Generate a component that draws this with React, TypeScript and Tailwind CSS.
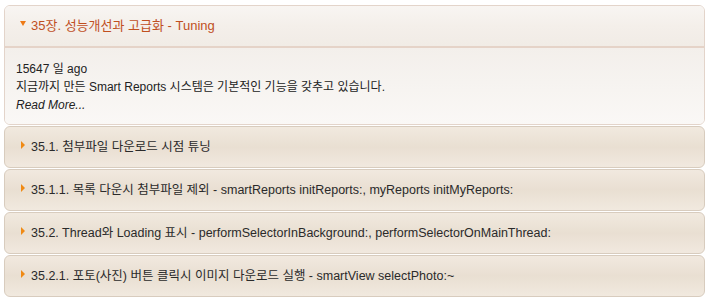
import React from 'react';

const font = { fontFamily: '"Liberation Sans", "Noto Sans CJK KR", sans-serif' };

const items = [
  '35.1. 첨부파일 다운로드 시점 튜닝',
  '35.1.1. 목록 다운시 첨부파일 제외 - smartReports initReports:, myReports initMyReports:',
  '35.2. Thread와 Loading 표시 - performSelectorInBackground:, performSelectorOnMainThread:',
  '35.2.1. 포토(사진) 버튼 클릭시 이미지 다운로드 실행 - smartView selectPhoto:~',
];

const App: React.FC = () => {
  return (
    <div className="w-[709px] h-[301px] bg-white px-[4px] pt-[5px]" style={font}>
      <div className="rounded-[6px] border border-[#e3d4ca] overflow-hidden">
        <div className="h-[42px] flex items-center pl-[15px] border-b-2 border-[#e5d3c8] bg-linear-to-b from-[#f8f5f2] via-[#f4efea] to-[#f1ece6]">
          <span className="w-0 h-0 border-l-[3px] border-r-[3px] border-t-[5px] border-l-transparent border-r-transparent border-t-[#ee7a16] mr-[5px] -mt-[6px]" />
          <span className="text-[13px] text-[#c04f1f]">35장. 성능개선과 고급화 - Tuning</span>
        </div>
        <div className="h-[76px] pl-[11px] pt-[12px] text-[12px] leading-[18px] text-[#222] bg-linear-to-b from-[#f3efeb] to-[#faf8f6]">
          <div>15647 일 ago</div>
          <div>지금까지 만든 Smart Reports 시스템은 기본적인 기능을 갖추고 있습니다.</div>
          <div className="italic">Read More...</div>
        </div>
      </div>
      <div className="flex flex-col gap-[1px] mt-[1px]">
        {items.map((t) => (
          <div
            key={t}
            className="h-[42px] rounded-[6px] border border-[#d8ccbe] flex items-center pl-[16px] bg-linear-to-b from-[#f1e9df] via-[#e9dfd2] to-[#f1e9df]"
          >
            <span className="w-0 h-0 border-t-[4px] border-b-[4px] border-l-[4px] border-t-transparent border-b-transparent border-l-[#f08a14] mr-[6px] -mt-[5px]" />
            <span className="text-[12.5px] text-[#2a2a2a]">{t}</span>
          </div>
        ))}
      </div>
    </div>
  );
};

export default App;
